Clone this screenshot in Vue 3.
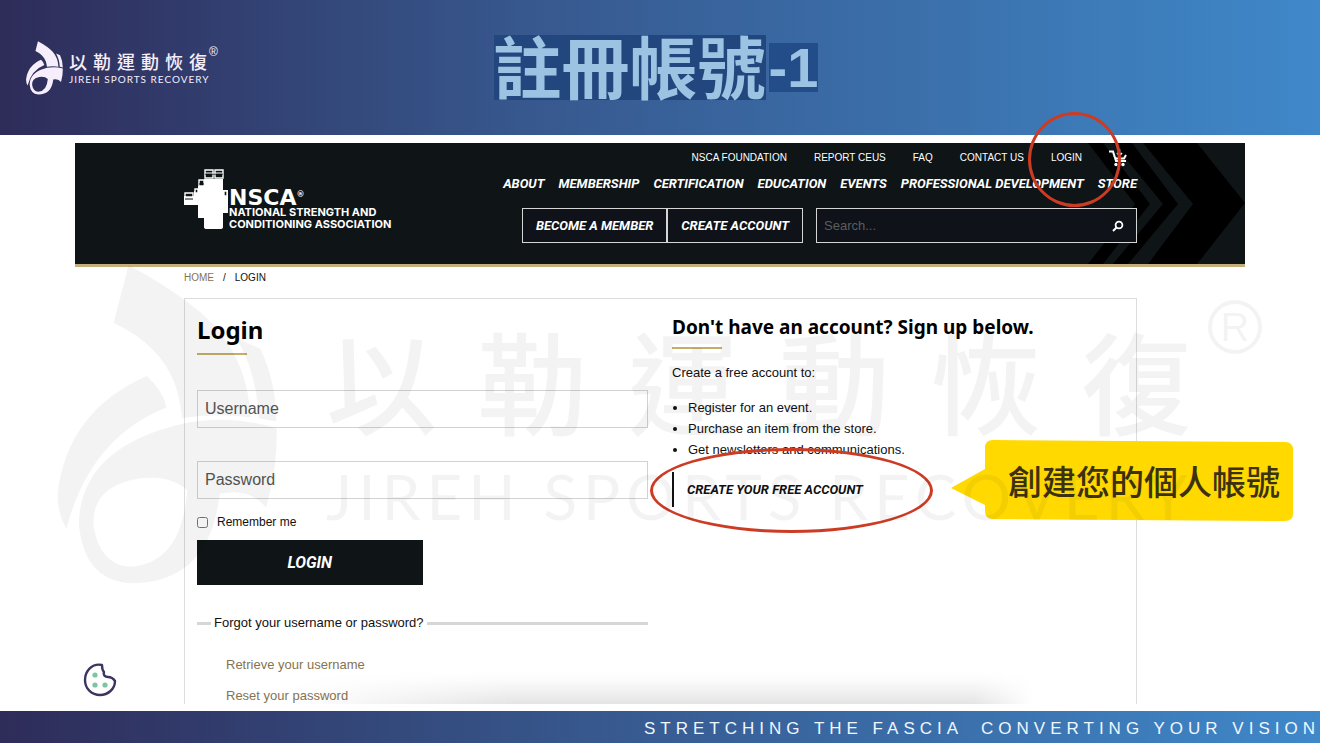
<template>
  <div class="slide">
    <svg class="defs" aria-hidden="true">
      <symbol id="ribbon" viewBox="20 10 665 965">
        <path d="M235 10 L190 185 Q330 250 375 370 Q392 420 396 472 Q500 455 603 470 Q595 310 500 200 Q420 110 235 10Z" />
        <path d="M290 345 Q340 390 350 440 Q120 530 48 805 Q20 760 21 700 Q50 450 290 345Z" />
        <path d="M560 230 L632 262 Q680 360 681 482 L628 472 Q620 330 560 230Z" />
        <path d="M85 790 Q90 560 400 488 Q540 460 682 502 Q685 620 650 742 Q600 680 510 700 Q480 970 240 970 Q100 960 85 790Z M130 800 Q150 915 240 920 Q395 910 412 690 Q360 640 260 655 Q120 680 130 800Z" fill-rule="evenodd" />
      </symbol>
    </svg>

    <header class="slide-header">
      <div class="brand">
        <svg class="brand-mark"><use href="#ribbon" /></svg>
        <div class="brand-text">
          <span class="brand-name">以勒運動恢復</span>
          <span class="brand-sub">JIREH SPORTS RECOVERY</span>
        </div>
        <span class="brand-reg">®</span>
      </div>
      <h1 class="title"><span class="title-cjk">註冊帳號</span><span class="title-num">-1</span></h1>
    </header>

    <main class="capture">
      <div class="site-header">
        <svg class="chevrons" viewBox="0 0 160 121" aria-hidden="true">
          <path d="M58 0H112L160 60L112 121H63L108 61Z" />
          <path d="M28 0H47L93 61L43 121H28L78 61Z" />
          <path d="M3 0H18L65 61L18 121H3L50 61Z" />
        </svg>
        <a href="#" class="nsca">
          <svg class="nsca-mark" viewBox="0 0 45 61" aria-hidden="true">
            <path d="M20 10H39V21H44V44H39V58Q39 60 36 60H23Q20 60 20 58V49H14V36H0V27H10V22H14V17H20Z" fill="#fff" />
            <path d="M21 1H29V9H21ZM31 1H39V9H31ZM15 11H20V17H15ZM1 24H9V28H1ZM11 20H14V24H11ZM40 22H43V27H40Z" fill="#0f1416" stroke="#fff" stroke-width="1.4" />
            <path d="M21 5H39M1 30H9M15 15H20" stroke="#0f1416" stroke-width="1" />
            <path d="M21 4H39" stroke="#fff" stroke-width="1" />
          </svg>
          <span class="nsca-text">
            <span class="nsca-name">NSCA<sup>®</sup></span>
            <span>NATIONAL STRENGTH AND</span>
            <span>CONDITIONING ASSOCIATION</span>
          </span>
        </a>
        <div class="site-nav">
          <nav class="top-links">
            <a v-for="item in topLinks" :key="item" href="#">{{ item }}</a>
            <a href="#" class="cart" aria-label="Cart">
              <svg viewBox="0 0 18 18">
                <path d="M0 2.5H4L7 12H17M5 7L7 9.5H15L17 6" fill="none" stroke="#fff" stroke-width="2" />
                <path d="M10.5 0V6M8 4L10.5 6.5L13 4" fill="none" stroke="#fff" stroke-width="1.5" />
                <circle cx="7" cy="15.5" r="1.7" fill="#fff" />
                <circle cx="14" cy="15.5" r="1.7" fill="#fff" />
              </svg>
            </a>
          </nav>
          <nav class="main-links">
            <a v-for="item in mainLinks" :key="item" href="#">{{ item }}</a>
          </nav>
          <div class="actions">
            <button type="button">BECOME A MEMBER</button>
            <button type="button">CREATE ACCOUNT</button>
            <form class="search" @submit.prevent>
              <input v-model="query" type="text" placeholder="Search..." aria-label="Search">
              <button type="submit" aria-label="Submit search">
                <svg viewBox="0 0 12 12">
                  <circle cx="7" cy="5" r="3.4" fill="none" stroke="#fff" stroke-width="1.8" />
                  <path d="M4.5 7.5L1 11" stroke="#fff" stroke-width="2" />
                </svg>
              </button>
            </form>
          </div>
        </div>
      </div>

      <div class="breadcrumb">
        <a href="#">HOME</a><span>/</span><span class="current">LOGIN</span>
      </div>

      <div class="card">
        <form class="login" @submit.prevent>
          <h2>Login</h2>
          <input v-model="username" class="field" type="text" placeholder="Username" aria-label="Username">
          <input v-model="password" class="field" type="password" placeholder="Password" aria-label="Password">
          <label class="remember"><input v-model="remember" type="checkbox">Remember me</label>
          <button type="submit" class="login-btn">LOGIN</button>
          <div class="forgot">Forgot your username or password?</div>
          <div class="help-links">
            <a href="#">Retrieve your username</a>
            <a href="#">Reset your password</a>
          </div>
        </form>

        <section class="signup">
          <h3>Don't have an account? Sign up below.</h3>
          <p>Create a free account to:</p>
          <ul>
            <li v-for="item in benefits" :key="item">{{ item }}</li>
          </ul>
          <a href="#" class="create-link">CREATE YOUR FREE ACCOUNT</a>
        </section>
      </div>

      <div class="bottom-shade"></div>
      <button type="button" class="cookie" aria-label="Cookie settings">
        <svg viewBox="0 0 34 34">
          <path d="M19 2C9 0 2 8 2 17C2 26 9 32 17 32C25 32 32 26 32 18C30 15 28 14 25 14C22 14 20 12 21 9C19 7 19 5 19 2Z" fill="#fff" stroke="#3b3560" stroke-width="2.4" stroke-linejoin="round" />
          <circle cx="12" cy="12" r="2.6" fill="#7cc5a0" />
          <circle cx="12" cy="22" r="2.6" fill="#7cc5a0" />
          <circle cx="22" cy="22" r="2.6" fill="#7cc5a0" />
        </svg>
      </button>
    </main>

    <footer class="slide-footer">
      <span>STRETCHING THE FASCIA</span>
      <span>CONVERTING YOUR VISION</span>
    </footer>

    <div class="ring ring-login"></div>
    <div class="ring ring-create"></div>

    <div class="callout">
      <svg viewBox="0 0 342 82" aria-hidden="true">
        <path d="M42 0L334 2Q342 2 342 10V74Q342 81 334 81L42 79Q34 79 34 71V65L0 48L34 29V8Q34 0 42 0Z" fill="#ffd900" />
      </svg>
      <span>創建您的個人帳號</span>
    </div>

    <div class="watermark" aria-hidden="true">
      <svg class="wm-mark"><use href="#ribbon" /></svg>
      <div class="wm-text">
        <span class="wm-name">以勒運動恢復</span>
        <span class="wm-sub">JIREH SPORTS RECOVERY</span>
      </div>
      <span class="wm-reg">R</span>
    </div>
  </div>
</template>

<script setup>
import { ref } from 'vue'

const query = ref('')
const username = ref('')
const password = ref('')
const remember = ref(false)

const topLinks = ['NSCA FOUNDATION', 'REPORT CEUS', 'FAQ', 'CONTACT US', 'LOGIN']

const mainLinks = [
  'ABOUT',
  'MEMBERSHIP',
  'CERTIFICATION',
  'EDUCATION',
  'EVENTS',
  'PROFESSIONAL DEVELOPMENT',
  'STORE'
]

const benefits = [
  'Register for an event.',
  'Purchase an item from the store.',
  'Get newsletters and communications.'
]
</script>

<style>
body {
  margin: 0;
}
</style>

<style scoped>
* {
  box-sizing: border-box;
}

.slide {
  position: relative;
  display: flex;
  flex-direction: column;
  height: 100vh;
  overflow: hidden;
  background: #fff;
  font-family: "Liberation Sans", "Noto Sans CJK TC", sans-serif;
  color: #111;
}

.defs {
  position: absolute;
  width: 0;
  height: 0;
}

a {
  color: inherit;
  text-decoration: none;
}

button {
  font-family: inherit;
  cursor: pointer;
}

.slide-header {
  display: grid;
  grid-template-columns: 1fr auto 1fr;
  align-items: center;
  height: 135px;
  flex-shrink: 0;
  padding: 0 34px 0 26px;
  background: linear-gradient(90deg, #2e2c59, #37588e 40%, #3f88c9);
}

.brand {
  display: flex;
  align-items: center;
  color: #f6eefa;
}

.brand-mark {
  width: 37px;
  height: 54px;
  fill: currentColor;
}

.brand-text {
  display: flex;
  flex-direction: column;
  margin-left: 6px;
}

.brand-name {
  font-family: "Noto Sans CJK TC", sans-serif;
  font-size: 18px;
  font-weight: 500;
  line-height: 22px;
  letter-spacing: 6px;
}

.brand-sub {
  font-family: Lato, sans-serif;
  font-size: 10px;
  line-height: 14px;
  letter-spacing: 1px;
}

.brand-reg {
  align-self: flex-start;
  margin-top: 4px;
  margin-left: -4px;
  font-size: 12px;
}

.title {
  display: flex;
  align-items: center;
  gap: 3px;
  margin: 0;
  color: #9dc3e2;
  font-weight: 700;
}

.title-cjk {
  height: 65px;
  background: #22477f;
  font-family: "Noto Sans CJK TC", sans-serif;
  font-size: 68px;
  line-height: 60px;
}

.title-num {
  height: 49px;
  background: #224d88;
  font-size: 56px;
  line-height: 50px;
}

.capture {
  position: relative;
  display: flex;
  flex-direction: column;
  flex: 1;
  min-height: 0;
  margin: 8px 75px 7px;
  overflow: hidden;
}

.site-header {
  position: relative;
  display: flex;
  justify-content: space-between;
  height: 124px;
  flex-shrink: 0;
  padding: 0 108px 0 109px;
  background: #0f1416;
  border-bottom: 3px solid #c4ae7c;
  color: #fff;
}

.chevrons {
  position: absolute;
  top: 0;
  right: 0;
  width: 160px;
  height: 121px;
  fill: #000;
}

.nsca {
  display: flex;
  align-items: flex-start;
  padding-top: 26px;
}

.nsca-mark {
  width: 45px;
  height: 61px;
}

.nsca-text {
  display: flex;
  flex-direction: column;
  padding-top: 20px;
  font-family: Inter, sans-serif;
  font-size: 11px;
  line-height: 12px;
  font-weight: 700;
  white-space: nowrap;
}

.nsca-name {
  font-family: "DejaVu Sans", sans-serif;
  font-size: 22px;
  line-height: 17px;
}

.nsca-name sup {
  font-size: 8px;
  line-height: 8px;
  vertical-align: 8px;
}

.site-nav {
  position: relative;
  display: flex;
  flex-direction: column;
  align-items: flex-end;
  padding-top: 7px;
  white-space: nowrap;
}

.top-links {
  display: flex;
  align-items: center;
  gap: 27px;
  height: 15px;
  padding-right: 10px;
  font-size: 10px;
}

.cart svg {
  display: block;
  width: 18px;
  height: 18px;
}

.main-links {
  display: flex;
  gap: 14px;
  margin-top: 10px;
  font-family: Roboto, sans-serif;
  font-size: 13px;
  font-style: italic;
  font-weight: 700;
  line-height: 18px;
}

.actions {
  display: flex;
  height: 35px;
  margin-top: 15px;
}

.actions > button {
  padding: 0 13px;
  background: #0f1218;
  border: 1px solid #d5d5d5;
  color: #fff;
  font-family: Roboto, sans-serif;
  font-size: 13px;
  font-style: italic;
  font-weight: 700;
}

.search {
  display: flex;
  width: 321px;
  margin-left: 13px;
  background: #0f1218;
  border: 1px solid #d5d5d5;
}

.search input {
  flex: 1;
  min-width: 0;
  padding: 0 7px;
  background: none;
  border: 0;
  color: #fff;
  font-family: inherit;
  font-size: 13px;
}

.search input::placeholder {
  color: #5d5d60;
}

.search button {
  padding: 0 12px;
  background: none;
  border: 0;
}

.search button svg {
  display: block;
  width: 12px;
  height: 12px;
}

.breadcrumb {
  display: flex;
  gap: 9px;
  padding: 4px 109px 14px;
  font-size: 10px;
  line-height: 13px;
}

.breadcrumb a {
  color: #86734f;
}

.card {
  display: grid;
  grid-template-columns: 1fr 1fr;
  gap: 24px;
  flex: 1;
  min-height: 0;
  margin: 0 108px 0 109px;
  padding: 16px 13px 0 12px;
  border: solid #dcdcdc;
  border-width: 1px 1px 0;
}

h2,
h3 {
  margin: 0;
  font-family: "Noto Sans", sans-serif;
  color: #000;
}

h2 {
  margin-bottom: 2px;
  font-size: 24px;
  line-height: 30px;
}

h3 {
  font-size: 19px;
  line-height: 24px;
  white-space: nowrap;
}

h2::after,
h3::after {
  content: "";
  display: block;
  width: 50px;
  height: 2px;
  margin-top: 8px;
  background: #c5ae6c;
}

.login {
  display: flex;
  flex-direction: column;
}

.field {
  height: 38px;
  margin-top: 33px;
  padding: 0 7px;
  background: none;
  border: 1px solid #d2d2d2;
  border-radius: 0;
  font-family: inherit;
  font-size: 16px;
}

.field::placeholder {
  color: #555;
}

.remember {
  display: flex;
  align-items: center;
  gap: 9px;
  height: 14px;
  margin-top: 16px;
  font-size: 12px;
}

.remember input {
  width: 11px;
  height: 11px;
  margin: 0;
}

.login-btn {
  width: 50%;
  height: 45px;
  flex-shrink: 0;
  margin-top: 11px;
  background: #0f1416;
  border: 0;
  color: #fff;
  font-family: Roboto, sans-serif;
  font-size: 16px;
  font-style: italic;
  font-weight: 700;
}

.forgot {
  display: flex;
  align-items: center;
  gap: 3px;
  margin-top: 29px;
  font-size: 13px;
  line-height: 18px;
  white-space: nowrap;
}

.forgot::before,
.forgot::after {
  content: "";
  width: 14px;
  height: 3px;
  background: #d4d6d8;
}

.forgot::after {
  flex: 1;
}

.help-links {
  display: flex;
  flex-direction: column;
  gap: 11px;
  margin-top: 23px;
  padding-left: 29px;
  color: #86734f;
  font-size: 13px;
  line-height: 20px;
}

.signup {
  font-size: 13px;
}

.signup p {
  margin: 15px 0;
  line-height: 18px;
}

.signup ul {
  margin: 0;
  padding-left: 16px;
  line-height: 21px;
}

.create-link {
  display: inline-block;
  margin-top: 12px;
  padding-left: 13px;
  border-left: 2px solid #111;
  font-family: Roboto, sans-serif;
  font-size: 13px;
  font-style: italic;
  font-weight: 700;
  line-height: 35px;
}

.bottom-shade {
  position: absolute;
  left: 18%;
  right: 18%;
  bottom: 0;
  height: 32px;
  background: linear-gradient(0deg, rgba(0, 0, 0, 0.1), rgba(0, 0, 0, 0.02) 70%, rgba(0, 0, 0, 0));
  mask-image: linear-gradient(90deg, transparent, #000 30%, #000 92%, transparent);
  pointer-events: none;
}

.cookie {
  position: absolute;
  left: 8px;
  bottom: 7px;
  padding: 0;
  background: none;
  border: 0;
}

.cookie svg {
  display: block;
  width: 34px;
  height: 34px;
}

.slide-footer {
  display: flex;
  justify-content: flex-end;
  align-items: center;
  gap: 18px;
  height: 32px;
  flex-shrink: 0;
  padding-top: 4px;
  background: linear-gradient(90deg, #2e2c59, #37588e 45%, #3f88c9);
  color: #eef6ff;
  font-size: 17px;
  letter-spacing: 5px;
  white-space: nowrap;
}

.ring {
  position: absolute;
  border: 3px solid #cc3c24;
  border-radius: 50%;
  pointer-events: none;
}

.ring-login {
  top: 112px;
  right: 199px;
  width: 93px;
  height: 95px;
}

.ring-create {
  top: 448px;
  left: 650px;
  width: 283px;
  height: 85px;
}

.callout {
  position: absolute;
  top: 440px;
  right: 27px;
  display: flex;
  align-items: center;
  justify-content: flex-end;
  width: 342px;
  height: 82px;
  padding-right: 13px;
  padding-bottom: 2px;
  color: #3c3210;
  font-family: "Noto Sans CJK TC", sans-serif;
  font-size: 34px;
  font-weight: 500;
  white-space: nowrap;
}

.callout svg {
  position: absolute;
  inset: 0;
}

.callout span {
  position: relative;
}

.watermark {
  position: absolute;
  top: 265px;
  left: 57px;
  display: flex;
  align-items: flex-start;
  color: #000;
  opacity: 0.045;
  white-space: nowrap;
  pointer-events: none;
}

.wm-mark {
  width: 221px;
  height: 320px;
  fill: currentColor;
}

.wm-text {
  display: flex;
  flex-direction: column;
  width: 890px;
  padding-top: 44px;
  padding-left: 48px;
}

.wm-name {
  font-family: "Noto Sans CJK TC", sans-serif;
  font-size: 111px;
  font-weight: 500;
  line-height: 140px;
  letter-spacing: 40px;
}

.wm-sub {
  font-family: Lato, sans-serif;
  font-size: 62px;
  line-height: 94px;
  letter-spacing: 6px;
}

.wm-reg {
  width: 54px;
  height: 54px;
  margin-top: 35px;
  margin-left: 40px;
  border: 4px solid;
  border-radius: 50%;
  font-size: 40px;
  line-height: 46px;
  text-align: center;
}
</style>
